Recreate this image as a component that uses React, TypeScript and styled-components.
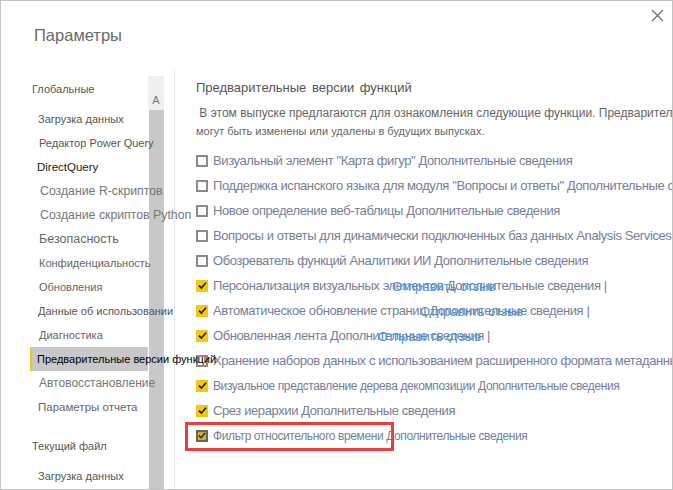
import React from 'react';
import styled, { createGlobalStyle } from 'styled-components';

const GlobalStyle = createGlobalStyle`
  html, body {
    margin: 0;
    padding: 0;
    background: #fff;
  }
  body {
    font-family: "Liberation Sans", Arial, sans-serif;
  }
`;

const Dialog = styled.div`
  position: relative;
  box-sizing: border-box;
  width: 673px;
  height: 490px;
  border: 1px solid #c4c4c4;
  display: flex;
  flex-direction: column;
  overflow: hidden;
  background: #fff;
`;

const Header = styled.div`
  height: 69px;
  flex-shrink: 0;
  display: flex;
  justify-content: space-between;
  align-items: flex-start;
  padding: 0 8px 0 33px;
`;

const Title = styled.h1`
  margin: 24px 0 0;
  font-size: 16.5px;
  font-weight: 400;
  line-height: 20px;
  color: #6a6a6a;
`;

const Close = styled.button`
  margin-top: 7px;
  width: 14px;
  height: 14px;
  padding: 0;
  border: none;
  background: none;
  display: flex;
  align-items: center;
  justify-content: center;
`;

const Body = styled.div`
  flex: 1;
  min-height: 0;
  display: flex;
`;

const Nav = styled.nav`
  position: relative;
  z-index: 2;
  width: 147px;
  flex-shrink: 0;
  padding: 7px 0 0 29px;
  box-sizing: border-box;
`;

const SectionTitle = styled.div<{ $gap: number }>`
  height: 24px;
  line-height: 24px;
  margin-top: ${p => p.$gap}px;
  margin-bottom: 6px;
  padding-left: 2px;
  font-size: 11px;
  color: #555;
  white-space: nowrap;
`;

const NavItem = styled.div<{ $size: number; $tone: string; $indent: number; $active?: boolean }>`
  height: 24px;
  line-height: 24px;
  white-space: nowrap;
  font-size: ${p => p.$size}px;
  padding-left: ${p => p.$indent}px;
  color: ${p => (p.$active ? '#000' : p.$tone)};
  background: ${p => (p.$active ? '#c8c8c8' : 'transparent')};
  border-left: 2px solid ${p => (p.$active ? '#f2c811' : 'transparent')};
`;

const Scrollbar = styled.div`
  width: 16px;
  flex-shrink: 0;
  margin-top: 6px;
  display: flex;
  flex-direction: column;
`;

const ScrollUp = styled.div`
  height: 34px;
  box-sizing: border-box;
  padding-bottom: 4px;
  background: #efefef;
  display: flex;
  align-items: flex-end;
  justify-content: center;
  font-size: 11px;
  color: #777;
`;

const Thumb = styled.div`
  flex: 1;
  margin-left: 1px;
  background: #c8c8c8;
`;

const Divider = styled.div`
  width: 1px;
  flex-shrink: 0;
  margin-left: 10px;
  background: #e3e3e3;
`;

const Content = styled.section`
  flex: 1;
  min-width: 0;
  overflow: hidden;
  padding: 6px 0 0 21px;
`;

const Heading = styled.h2`
  margin: 0 0 4px;
  height: 24px;
  line-height: 24px;
  font-size: 13px;
  font-weight: 400;
  color: #555;
  word-spacing: 2px;
  white-space: nowrap;
`;

const Para = styled.p<{ $size: number }>`
  margin: 0;
  height: 18px;
  line-height: 18px;
  font-size: ${p => p.$size}px;
  color: #666;
  white-space: nowrap;
`;

const List = styled.div`
  margin-top: 8px;
  display: flex;
  flex-direction: column;
`;

const Row = styled.label<{ $flagged?: boolean }>`
  position: relative;
  height: 25px;
  display: flex;
  align-items: center;
  white-space: nowrap;

  ${p =>
    p.$flagged &&
    `
    &::after {
      content: '';
      position: absolute;
      left: -11px;
      top: -1px;
      width: 209px;
      height: 29px;
      box-sizing: border-box;
      border: 3px solid #e8403e;
      pointer-events: none;
    }
  `}
`;

const Box = styled.span<{ $checked: boolean; $focus?: boolean }>`
  box-sizing: border-box;
  width: 12px;
  height: 12px;
  flex-shrink: 0;
  margin-right: 5px;
  display: flex;
  align-items: center;
  justify-content: center;
  background: ${p => (p.$focus ? '#d8ae10' : p.$checked ? '#f2c811' : '#fff')};
  border: ${p => (p.$focus ? '2px solid #666' : p.$checked ? 'none' : '2px solid #8a8a8a')};
`;

const Label = styled.span<{ $size: number }>`
  font-size: ${p => p.$size}px;
  letter-spacing: -0.4px;
  color: #75809a;
`;

const Feedback = styled.span<{ $at: number }>`
  position: absolute;
  left: ${p => p.$at}px;
  top: 50%;
  transform: translateY(-50%);
  font-size: 13px;
  color: #4f94dc;
`;

const Check = () => (
  <svg width="9" height="9" viewBox="0 0 9 9">
    <path d="M1 4.6 L3.4 7 L8 1.8" fill="none" stroke="#222" strokeWidth="1.7" />
  </svg>
);

const globalItems = [
  { text: 'Загрузка данных', size: 11, tone: '#555', indent: 6 },
  { text: 'Редактор Power Query', size: 11, tone: '#555', indent: 7 },
  { text: 'DirectQuery', size: 11.5, tone: '#222', indent: 5 },
  { text: 'Создание R-скриптов', size: 12.3, tone: '#777', indent: 8 },
  { text: 'Создание скриптов Python', size: 12.3, tone: '#777', indent: 8 },
  { text: 'Безопасность', size: 12.5, tone: '#666', indent: 7 },
  { text: 'Конфиденциальность', size: 11, tone: '#666', indent: 7 },
  { text: 'Обновления', size: 11, tone: '#666', indent: 7 },
  { text: 'Данные об использовании', size: 11, tone: '#555', indent: 6 },
  { text: 'Диагностика', size: 11, tone: '#666', indent: 7 },
  { text: 'Предварительные версии функций', size: 11, tone: '#000', indent: 5, active: true },
  { text: 'Автовосстановление', size: 12, tone: '#777', indent: 7 },
  { text: 'Параметры отчета', size: 11.5, tone: '#666', indent: 6 },
];

type Feature = {
  text: string;
  size: number;
  checked: boolean;
  link?: number;
  flagged?: boolean;
};

const features: Feature[] = [
  { text: 'Визуальный элемент "Карта фигур" Дополнительные сведения', size: 13, checked: false },
  { text: 'Поддержка испанского языка для модуля "Вопросы и ответы" Дополнительные сведения', size: 13, checked: false },
  { text: 'Новое определение веб-таблицы Дополнительные сведения', size: 13, checked: false },
  { text: 'Вопросы и ответы для динамически подключенных баз данных Analysis Services Дополнительные сведения', size: 13, checked: false },
  { text: 'Обозреватель функций Аналитики ИИ Дополнительные сведения', size: 13, checked: false },
  { text: 'Персонализация визуальных элементов Дополнительные сведения |', size: 13, checked: true, link: 196 },
  { text: 'Автоматическое обновление страниц Дополнительные сведения |', size: 13, checked: true, link: 224 },
  { text: 'Обновленная лента Дополнительные сведения |', size: 13, checked: true, link: 182 },
  { text: 'Хранение наборов данных с использованием расширенного формата метаданных Дополнительные сведения', size: 13, checked: false },
  { text: 'Визуальное представление дерева декомпозиции Дополнительные сведения', size: 12, checked: true },
  { text: 'Срез иерархии Дополнительные сведения', size: 13, checked: true },
  { text: 'Фильтр относительного времени Дополнительные сведения', size: 12, checked: true, flagged: true },
];

export default function App() {
  return (
    <>
      <GlobalStyle />
      <Dialog>
        <Header>
          <Title>Параметры</Title>
          <Close aria-label="Закрыть">
            <svg width="13" height="13" viewBox="0 0 13 13">
              <path d="M1 1 L12 12 M12 1 L1 12" stroke="#666" strokeWidth="1.1" fill="none" />
            </svg>
          </Close>
        </Header>
        <Body>
          <Nav>
            <SectionTitle $gap={0}>Глобальные</SectionTitle>
            {globalItems.map(item => (
              <NavItem
                key={item.text}
                $size={item.size}
                $tone={item.tone}
                $indent={item.indent}
                $active={item.active}
              >
                {item.text}
              </NavItem>
            ))}
            <SectionTitle $gap={15}>Текущий файл</SectionTitle>
            <NavItem $size={11} $tone="#555" $indent={6}>
              Загрузка данных
            </NavItem>
          </Nav>
          <Scrollbar>
            <ScrollUp>A</ScrollUp>
            <Thumb />
          </Scrollbar>
          <Divider />
          <Content>
            <Heading>Предварительные версии функций</Heading>
            <Para $size={12}>
              &nbsp;В этом выпуске предлагаются для ознакомления следующие функции. Предварительные версии функций
            </Para>
            <Para $size={11}>могут быть изменены или удалены в будущих выпусках.</Para>
            <List>
              {features.map(f => (
                <Row key={f.text} $flagged={f.flagged}>
                  <Box $checked={f.checked} $focus={f.flagged}>
                    {f.checked && <Check />}
                  </Box>
                  <Label $size={f.size}>{f.text}</Label>
                  {f.link !== undefined && <Feedback $at={f.link}>Отправить отзыв</Feedback>}
                </Row>
              ))}
            </List>
          </Content>
        </Body>
      </Dialog>
    </>
  );
}
